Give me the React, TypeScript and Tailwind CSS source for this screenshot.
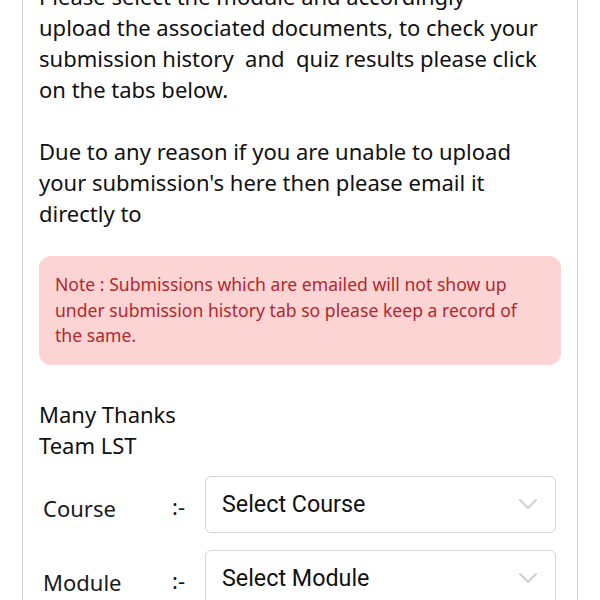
const body = { fontFamily: '"Noto Sans", "Open Sans", sans-serif' };
const roboto = { fontFamily: 'Roboto, "Noto Sans", sans-serif' };

function Chevron() {
  return (
    <svg width="20" height="12" viewBox="0 0 20 12" fill="none" className="mr-[1px]">
      <path d="M2 2 L10 10 L18 2" stroke="#cfcfcf" strokeWidth="2" strokeLinecap="round" strokeLinejoin="round" />
    </svg>
  );
}

function SelectRow({ label, placeholder }: { label: string; placeholder: string }) {
  return (
    <div className="flex items-center">
      <div className="w-[133px] pl-1 pt-2 text-[22px] text-[#1a1a1a]" style={body}>
        {label}
      </div>
      <div className="w-[33px] pt-1 text-[22px] text-[#1a1a1a]" style={body}>
        :-
      </div>
      <div className="flex h-[57px] w-[351px] items-center justify-between rounded-md border border-[#d6d6d6] bg-white pl-4 pr-4">
        <span className="text-[23.3px] text-[#111]" style={roboto}>
          {placeholder}
        </span>
        <Chevron />
      </div>
    </div>
  );
}

export default function App() {
  return (
    <div className="h-[600px] overflow-hidden bg-white">
      <div className="mx-[22px] -mt-[19px] border-x border-[#d4d4d4] px-4 pb-10">
        <div className="max-w-[500px] text-[22px] leading-[31px] text-[#111]" style={body}>
          <p>
            Please select the module and accordingly upload the associated documents, to check your
            submission history&nbsp; and&nbsp; quiz results please click on the tabs below.
          </p>
          <p className="mt-[31px]">
            Due to any reason if you are unable to upload your submission's here then please email it
            directly to
          </p>
        </div>

        {/* Note */}
        <div className="mt-[27px] rounded-xl bg-[#fdd4d4] px-4 py-4 text-[17.6px] leading-[25.5px] text-[#b3262b]" style={body}>
          Note : Submissions which are emailed will not show up under submission history tab so please keep a record of the same.
        </div>

        <div className="mt-[34px] text-[22px] leading-[31px] text-[#111]" style={body}>
          <p>Many Thanks</p>
          <p>Team LST</p>
        </div>

        <div className="mt-[15px] flex flex-col gap-[17px]">
          <SelectRow label="Course" placeholder="Select Course" />
          <SelectRow label="Module" placeholder="Select Module" />
        </div>
      </div>
    </div>
  );
}
